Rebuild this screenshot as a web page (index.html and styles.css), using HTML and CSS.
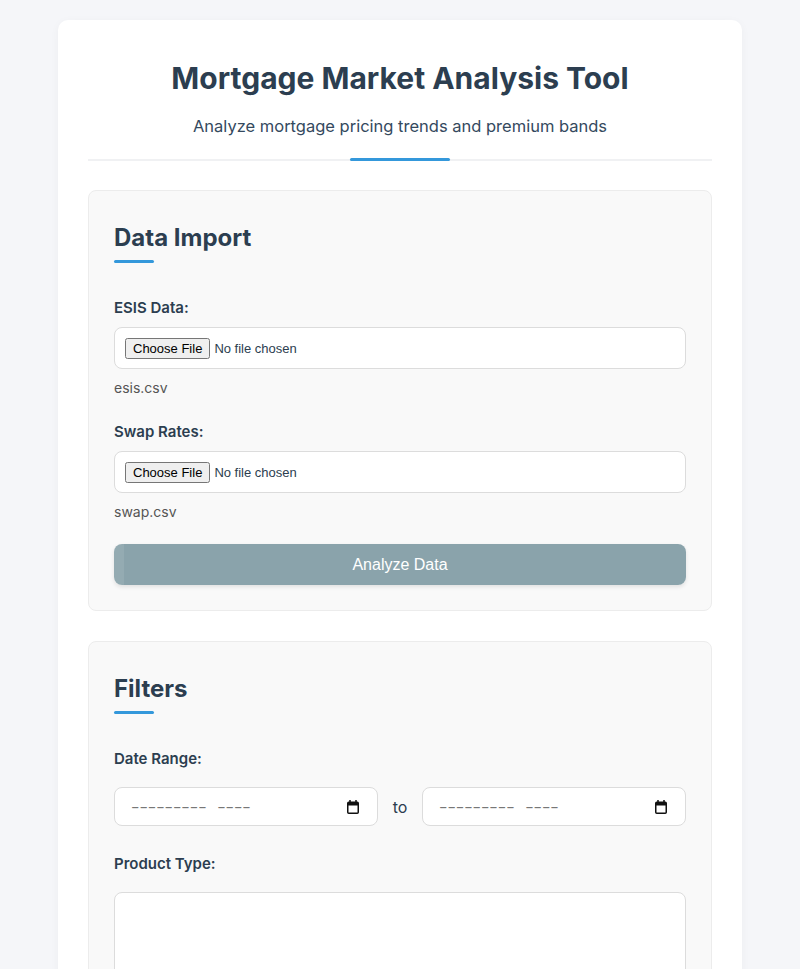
FILE: index.html
```html
<!DOCTYPE html>
<html lang="en">
<head>
<meta charset="utf-8">
<title>Mortgage Market Analysis Tool</title>
<link rel="stylesheet" href="styles.css">
</head>
<body>
<div class="container">
  <header class="header">
    <h1>Mortgage Market Analysis Tool</h1>
    <p>Analyze mortgage pricing trends and premium bands</p>
  </header>

  <section class="card">
    <h2>Data Import</h2>
    <div class="form-group">
      <label class="label">ESIS Data:</label>
      <input class="file-input" type="file">
      <div class="file-name">esis.csv</div>
    </div>
    <div class="form-group">
      <label class="label">Swap Rates:</label>
      <input class="file-input" type="file">
      <div class="file-name">swap.csv</div>
    </div>
    <button class="btn" type="button">Analyze Data</button>
  </section>

  <section class="card">
    <h2>Filters</h2>
    <div class="form-group filter-group">
      <label class="label label-wide">Date Range:</label>
      <div class="date-range">
        <div class="date-input"><span class="date-text">--------- ----</span>
          <svg class="cal" width="12" height="14" viewBox="0 0 12 14"><path d="M3 0v3M9 0v3" stroke="#111" stroke-width="1.5"/><rect x="0.75" y="2.25" width="10.5" height="11" rx="1" fill="none" stroke="#111" stroke-width="1.5"/><rect x="1" y="2.5" width="10" height="3" fill="#111"/></svg>
        </div>
        <span class="to">to</span>
        <div class="date-input"><span class="date-text">--------- ----</span>
          <svg class="cal" width="12" height="14" viewBox="0 0 12 14"><path d="M3 0v3M9 0v3" stroke="#111" stroke-width="1.5"/><rect x="0.75" y="2.25" width="10.5" height="11" rx="1" fill="none" stroke="#111" stroke-width="1.5"/><rect x="1" y="2.5" width="10" height="3" fill="#111"/></svg>
        </div>
      </div>
    </div>
    <div class="form-group">
      <label class="label label-wide">Product Type:</label>
      <select class="select" multiple></select>
    </div>
  </section>
</div>
</body>
</html>
```

FILE: styles.css
```css
* { box-sizing: border-box; }

body {
  margin: 0;
  padding: 20px 0;
  background: #f5f6f9;
  font-family: Inter, "Noto Sans", sans-serif;
  color: #2c3e50;
}

.container {
  width: 684px;
  margin: 0 auto;
  background: #fff;
  border-radius: 10px;
  padding: 40px 30px 30px;
  box-shadow: 0 2px 10px rgba(0,0,0,0.04);
}

.header {
  position: relative;
  text-align: center;
  padding-bottom: 20px;
  border-bottom: 2px solid #f0f1f3;
  margin-bottom: 29px;
}

.header::after {
  content: "";
  position: absolute;
  left: 50%;
  bottom: -2px;
  width: 100px;
  height: 3px;
  margin-left: -50px;
  background: #3498db;
  border-radius: 2px;
}

.header h1 {
  margin: 0 0 17px;
  font-size: 30px;
  line-height: 36px;
  font-weight: 700;
  color: #2c3e50;
}

.header p {
  margin: 0;
  font-size: 16.5px;
  line-height: 26px;
  color: #34495e;
}

.card {
  background: #f9f9f9;
  border: 1px solid #ececec;
  border-radius: 8px;
  padding: 32px 25px 25px;
  margin-bottom: 30px;
}

.card h2 {
  position: relative;
  margin: 0 0 33px;
  padding-bottom: 11px;
  font-size: 24px;
  line-height: 29px;
  font-weight: 700;
  color: #2c3e50;
}

.card h2::after {
  content: "";
  position: absolute;
  left: 0;
  bottom: 0;
  width: 40px;
  height: 3px;
  background: #3498db;
  border-radius: 2px;
}

.form-group {
  margin-bottom: 21px;
}

.label {
  display: block;
  font-size: 15px;
  line-height: 23px;
  font-weight: 600;
  color: #2c3e50;
  margin-bottom: 8px;
}

.label-wide {
  margin-bottom: 17px;
}

.file-input {
  display: block;
  width: 100%;
  height: 42px;
  padding: 10px;
  background: #fff;
  border: 1px solid #dcdcdc;
  border-radius: 8px;
  font-family: "Liberation Sans", Arial, sans-serif;
  font-size: 13px;
  color: #2c3e50;
}

.file-name {
  margin-top: 8px;
  font-size: 14px;
  line-height: 22px;
  color: #555;
}

.btn {
  display: block;
  width: 100%;
  height: 41px;
  border: none;
  border-radius: 8px;
  background: linear-gradient(to right, #94abb2 0, #94abb2 10px, #8aa3ab 10px);
  color: #fff;
  font-family: "Liberation Sans", Arial, sans-serif;
  font-size: 16px;
  box-shadow: 0 2px 4px rgba(0,0,0,0.1);
}

.filter-group {
  margin-bottom: 26px;
}

.date-range {
  display: flex;
  align-items: center;
  gap: 15px;
}

.date-input {
  flex: 1;
  display: flex;
  align-items: center;
  justify-content: space-between;
  height: 39px;
  padding: 0 18px 0 16px;
  background: #fff;
  border: 1px solid #dcdcdc;
  border-radius: 8px;
}

.date-text {
  display: inline-block;
  font-family: "Liberation Sans", Arial, sans-serif;
  font-size: 14px;
  color: #777;
  word-spacing: 2px;
  transform: scaleX(1.8);
  transform-origin: left center;
}

.cal { display: block; }

.to {
  font-size: 16px;
  color: #2c3e50;
}

.select {
  display: block;
  width: 100%;
  height: 150px;
  background: #fff;
  border: 1px solid #dcdcdc;
  border-radius: 8px;
}
```
